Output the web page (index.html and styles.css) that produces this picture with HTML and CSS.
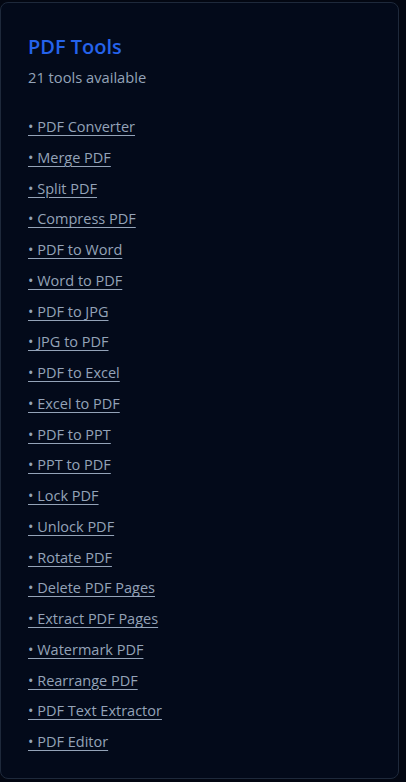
FILE: index.html
```html
<!DOCTYPE html>
<html lang="en">
<head>
<meta charset="utf-8">
<title>PDF Tools</title>
<link rel="stylesheet" href="styles.css">
</head>
<body>
<div class="card">
  <h2 class="title">PDF Tools</h2>
  <p class="count">21 tools available</p>
  <ul class="tools">
    <li><a href="#">• PDF Converter</a></li>
    <li><a href="#">• Merge PDF</a></li>
    <li><a href="#">• Split PDF</a></li>
    <li><a href="#">• Compress PDF</a></li>
    <li><a href="#">• PDF to Word</a></li>
    <li><a href="#">• Word to PDF</a></li>
    <li><a href="#">• PDF to JPG</a></li>
    <li><a href="#">• JPG to PDF</a></li>
    <li><a href="#">• PDF to Excel</a></li>
    <li><a href="#">• Excel to PDF</a></li>
    <li><a href="#">• PDF to PPT</a></li>
    <li><a href="#">• PPT to PDF</a></li>
    <li><a href="#">• Lock PDF</a></li>
    <li><a href="#">• Unlock PDF</a></li>
    <li><a href="#">• Rotate PDF</a></li>
    <li><a href="#">• Delete PDF Pages</a></li>
    <li><a href="#">• Extract PDF Pages</a></li>
    <li><a href="#">• Watermark PDF</a></li>
    <li><a href="#">• Rearrange PDF</a></li>
    <li><a href="#">• PDF Text Extractor</a></li>
    <li><a href="#">• PDF Editor</a></li>
  </ul>
</div>
</body>
</html>
```
FILE: styles.css
```css
html, body {
  margin: 0;
  padding: 0;
  background: #030712;
}
body {
  font-family: "Open Sans", "Noto Sans", sans-serif;
  width: 406px;
  height: 782px;
  overflow: hidden;
}
.card {
  box-sizing: border-box;
  width: 399px;
  height: 777px;
  margin-top: 2px;
  border: 1px solid #1e293b;
  border-radius: 8px;
  background: #030a1a;
  padding: 30px 27px;
}
.title {
  margin: 0;
  font-size: 20px;
  font-weight: 600;
  line-height: 28px;
  color: #2563eb;
}
.count {
  margin: 6px 0 0;
  font-size: 14.7px;
  line-height: 21px;
  color: #94a3b8;
}
.tools {
  list-style: none;
  margin: 28px 0 0;
  padding: 0;
  display: flex;
  flex-direction: column;
  gap: 8.25px;
}
.tools li {
  line-height: 22.5px;
  font-size: 14.5px;
}
.tools a {
  color: #94a3b8;
  text-decoration: underline;
  text-underline-offset: 3px;
}
```
